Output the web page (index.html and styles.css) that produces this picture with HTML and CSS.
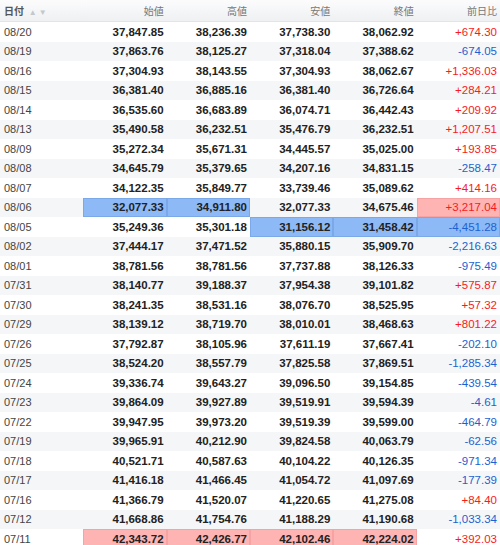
FILE: index.html
```html
<!DOCTYPE html>
<html lang="ja">
<head>
  <meta charset="UTF-8">
  <title>株価履歴</title>
  <link rel="stylesheet" href="styles.css">
</head>
<body>
  <table class="prices">
    <thead>
      <tr>
        <th class="date">日付 <span class="sort">▲</span><span class="sort">▼</span></th>
        <th>始値</th>
        <th>高値</th>
        <th>安値</th>
        <th>終値</th>
        <th>前日比</th>
      </tr>
    </thead>
    <tbody>
      <tr><td class="date">08/20</td><td>37,847.85</td><td>38,236.39</td><td>37,738.30</td><td>38,062.92</td><td class="up">+674.30</td></tr>
      <tr><td class="date">08/19</td><td>37,863.76</td><td>38,125.27</td><td>37,318.04</td><td>37,388.62</td><td class="down">-674.05</td></tr>
      <tr><td class="date">08/16</td><td>37,304.93</td><td>38,143.55</td><td>37,304.93</td><td>38,062.67</td><td class="up">+1,336.03</td></tr>
      <tr><td class="date">08/15</td><td>36,381.40</td><td>36,885.16</td><td>36,381.40</td><td>36,726.64</td><td class="up">+284.21</td></tr>
      <tr><td class="date">08/14</td><td>36,535.60</td><td>36,683.89</td><td>36,074.71</td><td>36,442.43</td><td class="up">+209.92</td></tr>
      <tr><td class="date">08/13</td><td>35,490.58</td><td>36,232.51</td><td>35,476.79</td><td>36,232.51</td><td class="up">+1,207.51</td></tr>
      <tr><td class="date">08/09</td><td>35,272.34</td><td>35,671.31</td><td>34,445.57</td><td>35,025.00</td><td class="up">+193.85</td></tr>
      <tr><td class="date">08/08</td><td>34,645.79</td><td>35,379.65</td><td>34,207.16</td><td>34,831.15</td><td class="down">-258.47</td></tr>
      <tr><td class="date">08/07</td><td>34,122.35</td><td>35,849.77</td><td>33,739.46</td><td>35,089.62</td><td class="up">+414.16</td></tr>
      <tr><td class="date">08/06</td><td class="low">32,077.33</td><td class="low">34,911.80</td><td>32,077.33</td><td>34,675.46</td><td class="up high">+3,217.04</td></tr>
      <tr><td class="date">08/05</td><td>35,249.36</td><td>35,301.18</td><td class="low">31,156.12</td><td class="low">31,458.42</td><td class="down low">-4,451.28</td></tr>
      <tr><td class="date">08/02</td><td>37,444.17</td><td>37,471.52</td><td>35,880.15</td><td>35,909.70</td><td class="down">-2,216.63</td></tr>
      <tr><td class="date">08/01</td><td>38,781.56</td><td>38,781.56</td><td>37,737.88</td><td>38,126.33</td><td class="down">-975.49</td></tr>
      <tr><td class="date">07/31</td><td>38,140.77</td><td>39,188.37</td><td>37,954.38</td><td>39,101.82</td><td class="up">+575.87</td></tr>
      <tr><td class="date">07/30</td><td>38,241.35</td><td>38,531.16</td><td>38,076.70</td><td>38,525.95</td><td class="up">+57.32</td></tr>
      <tr><td class="date">07/29</td><td>38,139.12</td><td>38,719.70</td><td>38,010.01</td><td>38,468.63</td><td class="up">+801.22</td></tr>
      <tr><td class="date">07/26</td><td>37,792.87</td><td>38,105.96</td><td>37,611.19</td><td>37,667.41</td><td class="down">-202.10</td></tr>
      <tr><td class="date">07/25</td><td>38,524.20</td><td>38,557.79</td><td>37,825.58</td><td>37,869.51</td><td class="down">-1,285.34</td></tr>
      <tr><td class="date">07/24</td><td>39,336.74</td><td>39,643.27</td><td>39,096.50</td><td>39,154.85</td><td class="down">-439.54</td></tr>
      <tr><td class="date">07/23</td><td>39,864.09</td><td>39,927.89</td><td>39,519.91</td><td>39,594.39</td><td class="down">-4.61</td></tr>
      <tr><td class="date">07/22</td><td>39,947.95</td><td>39,973.20</td><td>39,519.39</td><td>39,599.00</td><td class="down">-464.79</td></tr>
      <tr><td class="date">07/19</td><td>39,965.91</td><td>40,212.90</td><td>39,824.58</td><td>40,063.79</td><td class="down">-62.56</td></tr>
      <tr><td class="date">07/18</td><td>40,521.71</td><td>40,587.63</td><td>40,104.22</td><td>40,126.35</td><td class="down">-971.34</td></tr>
      <tr><td class="date">07/17</td><td>41,416.18</td><td>41,466.45</td><td>41,054.72</td><td>41,097.69</td><td class="down">-177.39</td></tr>
      <tr><td class="date">07/16</td><td>41,366.79</td><td>41,520.07</td><td>41,220.65</td><td>41,275.08</td><td class="up">+84.40</td></tr>
      <tr><td class="date">07/12</td><td>41,668.86</td><td>41,754.76</td><td>41,188.29</td><td>41,190.68</td><td class="down">-1,033.34</td></tr>
      <tr><td class="date">07/11</td><td class="high">42,343.72</td><td class="high">42,426.77</td><td class="high">42,102.46</td><td class="high">42,224.02</td><td class="up">+392.03</td></tr>
    </tbody>
  </table>
</body>
</html>
```
FILE: styles.css
```css
body {
  margin: 0;
  background: #fff;
  font-family: "Liberation Sans", "Noto Sans CJK JP", sans-serif;
  font-size: 11px;
  color: #333;
}
.prices {
  width: 500px;
  border-collapse: collapse;
  table-layout: fixed;
}
.prices th {
  height: 21px;
  padding: 0 3px 0 0;
  text-align: right;
  font-weight: normal;
  font-size: 10px;
  color: #777;
  background: linear-gradient(#fcfcfd, #eef0f2);
  border-bottom: 1px solid #e2e4e7;
}
.prices th.date {
  text-align: left;
  padding-left: 4px;
  font-weight: bold;
  color: #555;
}
.sort {
  color: #c4c7cb;
  font-size: 8px;
  font-weight: normal;
  margin-left: 2px;
}
.prices td {
  height: 19.5px;
  padding: 0 3px 0 0;
  text-align: right;
  font-weight: bold;
  font-size: 11.5px;
  color: #222;
}
.prices tbody tr:nth-child(even) td {
  background: #f5f6f8;
}
.prices td.date {
  text-align: left;
  padding-left: 4px;
  font-weight: normal;
  font-size: 11px;
  color: #444;
}
.prices td.up {
  color: #f51c1c;
  font-weight: normal;
}
.prices td.down {
  color: #1c62cf;
  font-weight: normal;
}
.prices tbody tr td.low {
  background: #8dbaf6;
  box-shadow: inset 0 0 0 1px #7ba8e6;
}
.prices tbody tr td.high {
  background: #ffb4b4;
  box-shadow: inset 0 0 0 1px #f5a3a3;
}
```
